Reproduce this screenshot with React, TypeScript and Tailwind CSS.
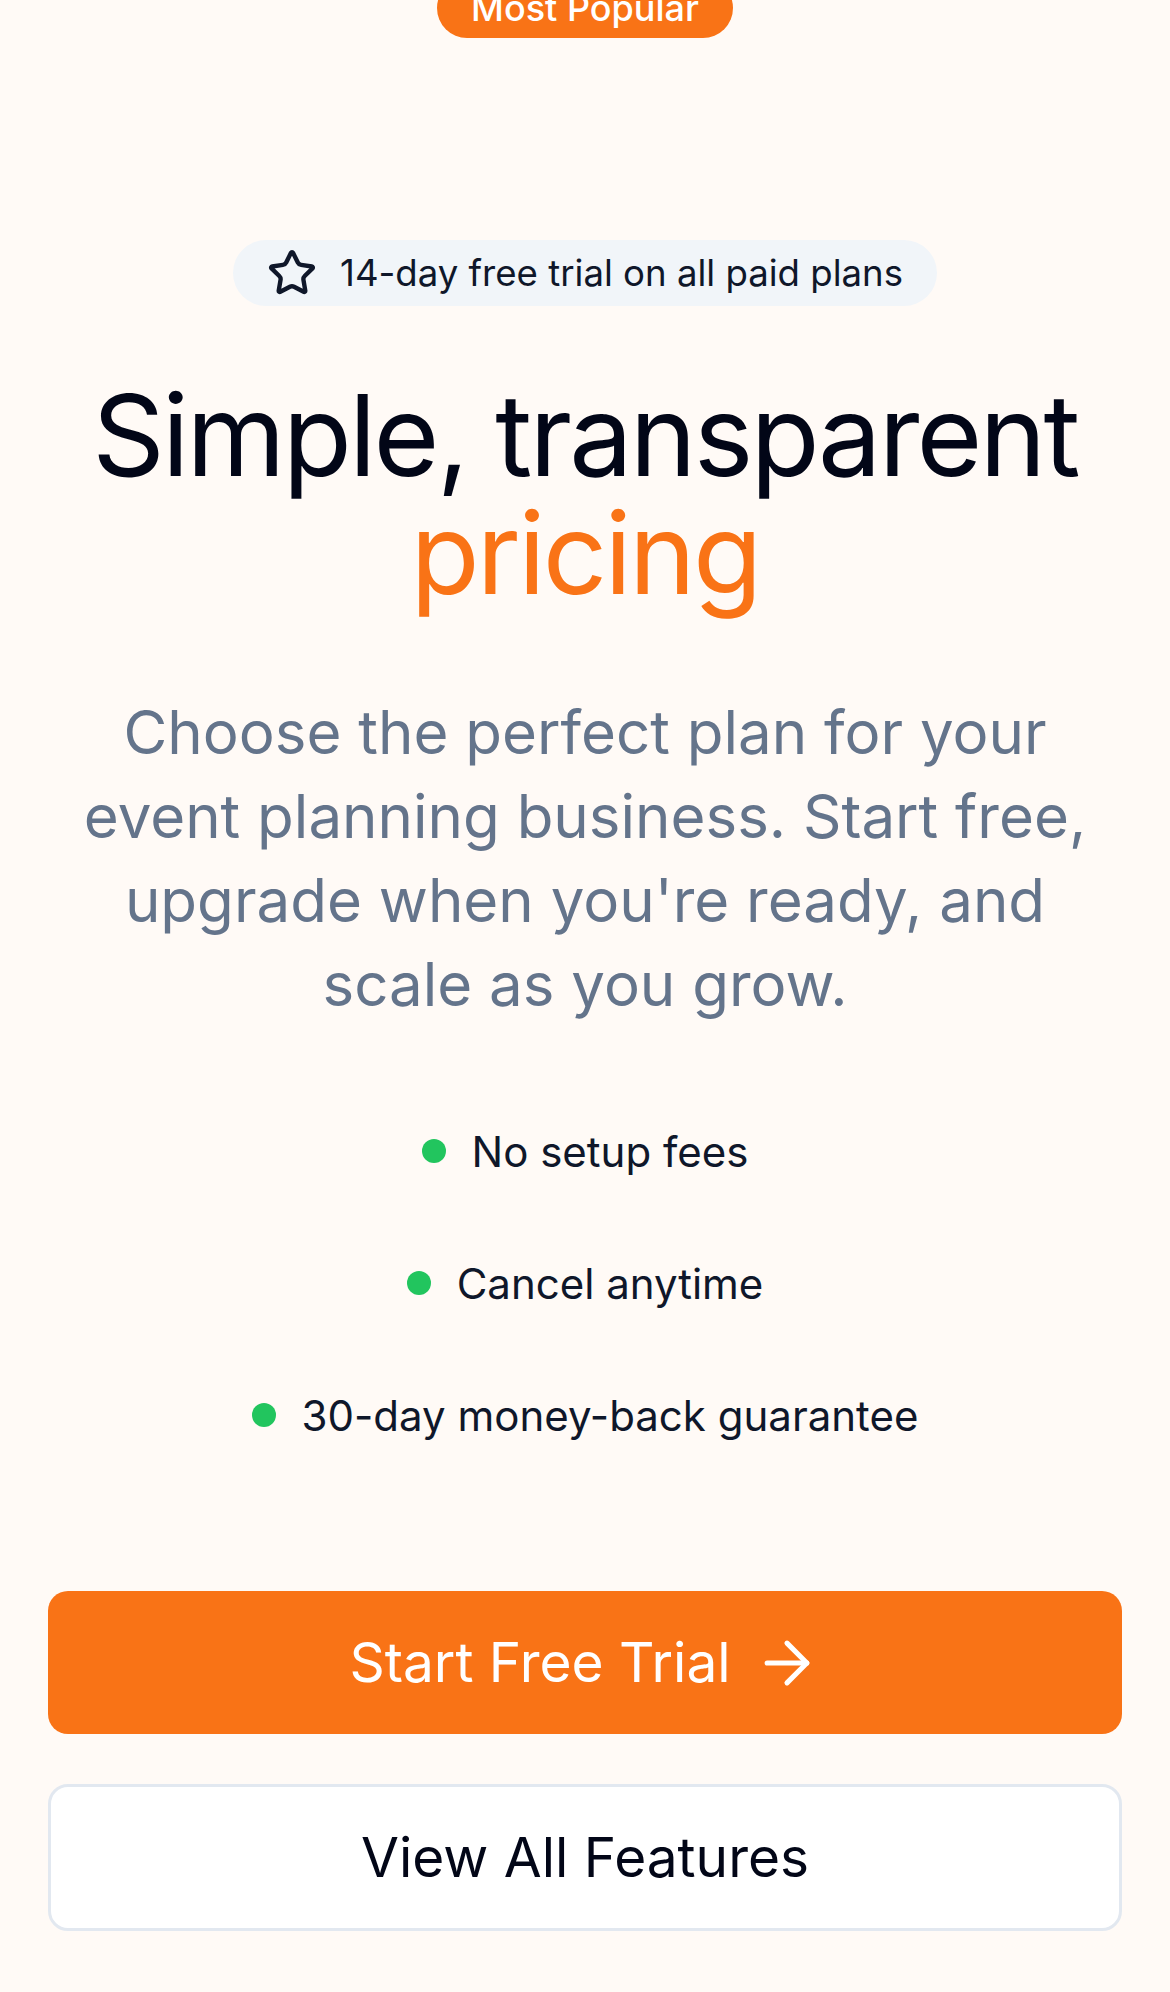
import { ArrowRight, Star } from "lucide-react";

const perks = ["No setup fees", "Cancel anytime", "30-day money-back guarantee"];

export default function App() {
  return (
    <div className="relative min-h-[1992px] overflow-hidden bg-[#fffaf6] font-['Inter','Noto_Sans',sans-serif]">
      <div className="absolute left-1/2 top-[-22px] flex h-[60px] w-[296px] -translate-x-1/2 items-center justify-center rounded-full bg-[#f97316] text-[36px] font-medium text-white">
        Most Popular
      </div>

      <div className="flex flex-col items-center px-12 pt-[240px]">
        <div className="flex h-[66px] items-center gap-[23px] rounded-full bg-[#f1f5f9] px-[34px] text-[36.6px] text-[#0f172a]">
          <Star className="h-[50px] w-[50px]" strokeWidth={2.1} />
          <span>14-day free trial on all paid plans</span>
        </div>

        <h1 className="mt-[70px] text-center text-[113px] font-normal leading-[118px] tracking-tight text-[#020617]">
          Simple, transparent
          <br />
          <span className="text-[#f97316]">pricing</span>
        </h1>

        <p className="mt-[78px] max-w-[1040px] text-center text-[60px] leading-[84px] text-[#64748b]">
          Choose the perfect plan for your event planning business. Start free, upgrade when you're ready, and scale as you grow.
        </p>

        <ul className="mt-[97px] flex flex-col items-center gap-[76px]">
          {perks.map((perk) => (
            <li key={perk} className="flex h-[56px] items-center gap-[26px] text-[42px] text-[#0f172a]">
              <span className="h-6 w-6 rounded-full bg-[#22c55e]" />
              {perk}
            </li>
          ))}
        </ul>

        <div className="mt-[148px] flex w-full flex-col gap-[50px]">
          <button className="flex h-[143px] w-full items-center justify-center gap-[22px] rounded-[20px] bg-[#f97316] text-[55px] text-white">
            Start Free Trial
            <ArrowRight className="h-[68px] w-[68px]" strokeWidth={1.8} />
          </button>
          <button className="flex h-[147px] w-full items-center justify-center rounded-[20px] border-[3px] border-[#e2e8f0] bg-white text-[55px] text-[#020617]">
            View All Features
          </button>
        </div>
      </div>
    </div>
  );
}
